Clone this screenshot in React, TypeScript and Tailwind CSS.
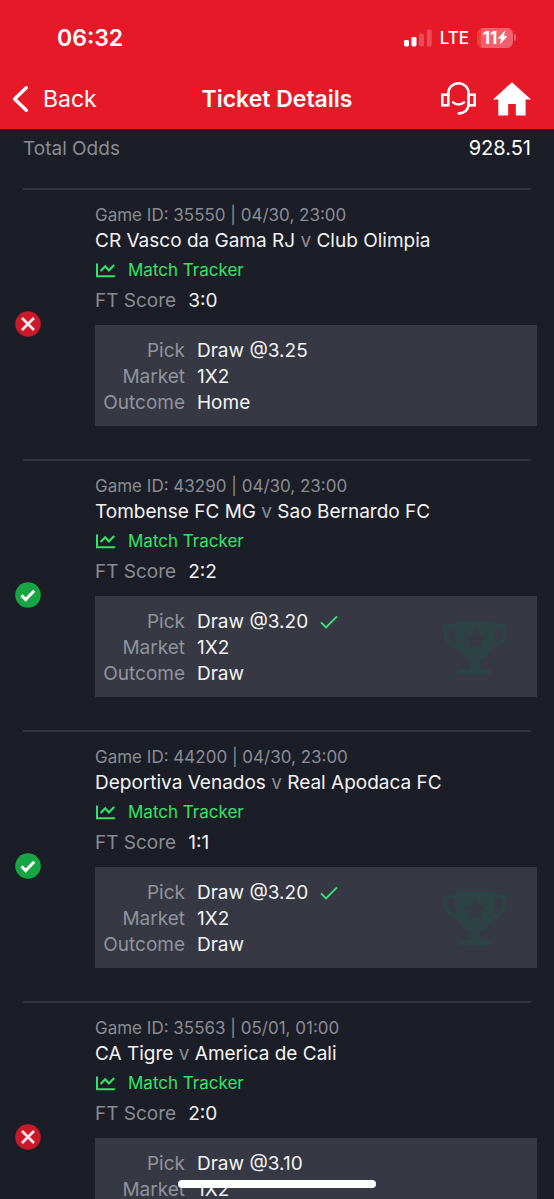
import React from "react";

type Game = {
  id: string;
  kickoff: string;
  home: string;
  away: string;
  score: string;
  pick: string;
  market: string;
  outcome: string;
  won: boolean;
};

const games: Game[] = [
  { id: "35550", kickoff: "04/30, 23:00", home: "CR Vasco da Gama RJ", away: "Club Olimpia", score: "3:0", pick: "Draw @3.25", market: "1X2", outcome: "Home", won: false },
  { id: "43290", kickoff: "04/30, 23:00", home: "Tombense FC MG", away: "Sao Bernardo FC", score: "2:2", pick: "Draw @3.20", market: "1X2", outcome: "Draw", won: true },
  { id: "44200", kickoff: "04/30, 23:00", home: "Deportiva Venados", away: "Real Apodaca FC", score: "1:1", pick: "Draw @3.20", market: "1X2", outcome: "Draw", won: true },
  { id: "35563", kickoff: "05/01, 01:00", home: "CA Tigre", away: "America de Cali", score: "2:0", pick: "Draw @3.10", market: "1X2", outcome: "Home", won: false },
];

function SignalIcon() {
  return (
    <svg width="28" height="18" viewBox="0 0 28 18" fill="#fff" aria-hidden="true">
      <rect x="0" y="11" width="5" height="6.5" rx="1.4" />
      <rect x="7.5" y="8" width="5" height="9.5" rx="1.4" />
      <rect x="15" y="4.5" width="5" height="13" rx="1.4" opacity="0.22" />
      <rect x="22.8" y="0.5" width="5" height="17" rx="1.4" opacity="0.22" />
    </svg>
  );
}

function BoltIcon() {
  return (
    <svg width="9" height="13" viewBox="0 0 9 13" fill="#fff" className="shrink-0" aria-hidden="true">
      <path d="M6.8 0 0 7.6h3.3L2.2 13 9 5.2H5.6z" stroke="#fff" strokeWidth="0.5" />
    </svg>
  );
}

function BackIcon() {
  return (
    <svg width="17" height="28" viewBox="0 0 17 28" fill="none" stroke="#fff" strokeWidth="3.4" strokeLinecap="round" strokeLinejoin="round" aria-hidden="true">
      <path d="M14.3 2.7 2.6 14l11.7 11.3" />
    </svg>
  );
}

function SupportIcon() {
  return (
    <svg width="35" height="33" viewBox="0 0 35 33" fill="none" stroke="#fff" strokeWidth="2.5" aria-hidden="true">
      <rect x="1.3" y="12.7" width="6" height="10.6" />
      <rect x="27.7" y="12.7" width="6" height="10.6" />
      <path d="M7.3 13v-1.6a10.2 10.2 0 0 1 20.4 0V21c0 6.6-3.8 10.4-10 10.4" strokeLinecap="round" />
      <path d="M12 20.4c3 2.7 8 2.7 11 0" strokeLinecap="round" />
    </svg>
  );
}

function HomeIcon() {
  return (
    <svg width="38" height="34" viewBox="0 0 38 34" fill="#fff" aria-hidden="true">
      <path d="M19 0.3 38 17.6h-5.4v15.9h-9.8V22h-7.6v11.5H5.3V17.6H0z" />
    </svg>
  );
}

function TrackerIcon() {
  return (
    <svg width="21" height="15" viewBox="0 0 21 15" fill="none" stroke="#34e468" strokeWidth="2" aria-hidden="true">
      <path d="M2 0.5v12.7h18" />
      <path d="m5.6 8 4.6-4.8 3.7 4.3 5.3-5.5" strokeWidth="2.1" />
    </svg>
  );
}

function StatusIcon({ won }: { won: boolean }) {
  return (
    <svg width="26" height="26" viewBox="0 0 26 26" fill="none" role="img" aria-label={won ? "Won" : "Lost"}>
      <circle cx="13" cy="13" r="12.8" fill={won ? "#17a643" : "#c9192b"} />
      {won ? (
        <path d="m6.6 13.4 4.1 4.2 8.5-8.8" stroke="#fff" strokeWidth="3" />
      ) : (
        <path d="m7 7 12 12M19 7 7 19" stroke="#fde4e6" strokeWidth="2.8" />
      )}
    </svg>
  );
}

function TickIcon() {
  return (
    <svg width="18" height="14" viewBox="0 0 18 14" fill="none" stroke="#3be473" strokeWidth="1.9" aria-hidden="true">
      <path d="m1 7.3 5 5L17 1.3" />
    </svg>
  );
}

function TrophyIcon() {
  return (
    <svg width="64" height="54" viewBox="0 0 64 54" fill="none" aria-hidden="true">
      <path d="M13 5H2.2v5.5C2.2 18.5 7 24 16 25.5M51 5h10.8v5.5C61.8 18.5 57 24 48 25.5" stroke="#2d4343" strokeWidth="4" />
      <path
        fill="#2d4343"
        fillRule="evenodd"
        d="M12 0h40v14c0 14-6 22.5-15.5 25.5V48H45a3.5 3.5 0 0 1 3.5 5.5h-33A3.5 3.5 0 0 1 19 48h8.5v-8.5C18 36.5 12 28 12 14zM32 6.5l-3.2 7.3-7.9.8 5.9 5.3-1.7 7.8 6.9-4 6.9 4-1.7-7.8 5.9-5.3-7.9-.8z"
      />
    </svg>
  );
}

function StatusBar() {
  return (
    <div className="flex h-[68px] items-center justify-between pt-[7px] pr-[38px] pl-[57px]">
      <span className="text-[23px] leading-7 font-semibold">06:32</span>
      <div className="flex items-center">
        <SignalIcon />
        <span className="ml-2 text-[17px] leading-6 font-medium">LTE</span>
        <span className="ml-2 flex h-5 w-9 items-center justify-center gap-px rounded-md bg-linear-to-r from-[#fb3b36] from-12% to-[#f2606d] to-12% text-[17px] leading-5 font-bold">
          11
          <BoltIcon />
        </span>
        <span className="ml-px h-[7px] w-[2px] rounded-r-full bg-[#f2606d]" />
      </div>
    </div>
  );
}

function GameRow({ game }: { game: Game }) {
  return (
    <li>
      <div className="mx-[23px] h-[2px] bg-[#30333c]" />
      <div className="flex items-center">
        <div className="w-[95px] shrink-0 pb-[2px] pl-[15px]">
          <StatusIcon won={game.won} />
        </div>
        <div className="mr-[17px] min-w-0 flex-1 pt-[13px] pb-[33px] text-[19px] text-[#f4f4f6]">
          <p className="text-[17px] leading-6 text-[#8a8c95]">
            Game ID: {game.id} | {game.kickoff}
          </p>
          <h2 className="leading-7">
            {game.home} <span className="text-[#8a8c95]">v</span> {game.away}
          </h2>
          <a href="#tracker" className="flex items-center gap-3 text-[17px] leading-[30px] text-[#34e468]">
            <TrackerIcon />
            Match Tracker
          </a>
          <p className="flex gap-3 leading-8">
            <span className="text-[#8a8c95]">FT Score</span>
            <span>{game.score}</span>
          </p>
          <div className="mt-2 flex items-center justify-between bg-[#363943] pt-[13px] pr-[30px] pb-[10px]">
            <dl className="grid grid-cols-[90px_auto] gap-x-3 leading-[26px]">
              <dt className="text-right text-[#91939d]">Pick</dt>
              <dd className="flex items-center gap-3">
                {game.pick}
                {game.won && <TickIcon />}
              </dd>
              <dt className="text-right text-[#91939d]">Market</dt>
              <dd>{game.market}</dd>
              <dt className="text-right text-[#91939d]">Outcome</dt>
              <dd>{game.outcome}</dd>
            </dl>
            {game.won && <TrophyIcon />}
          </div>
        </div>
      </div>
    </li>
  );
}

export default function App() {
  return (
    <div className="flex h-screen flex-col bg-[#1b1e26] font-['Inter',sans-serif] text-white">
      <header className="shrink-0 bg-[#e51927]">
        <StatusBar />
        <nav className="grid h-[61px] grid-cols-[1fr_auto_1fr] items-center px-3">
          <button type="button" className="flex items-center gap-[14px] text-[23px] leading-7">
            <BackIcon />
            Back
          </button>
          <h1 className="text-[23px] leading-7 font-semibold">Ticket Details</h1>
          <div className="flex items-center justify-end gap-[17px] pr-[11px]">
            <button type="button" aria-label="Support">
              <SupportIcon />
            </button>
            <button type="button" aria-label="Home">
              <HomeIcon />
            </button>
          </div>
        </nav>
      </header>
      <main className="min-h-0 flex-1 overflow-y-auto [scrollbar-width:none]">
        <div className="flex items-baseline justify-between px-[23px] pt-1 pb-6 leading-[30px]">
          <span className="text-[19px] text-[#8a8c95]">Total Odds</span>
          <span className="text-xl leading-[30px]">928.51</span>
        </div>
        <ul>
          {games.map((game) => (
            <GameRow key={game.id} game={game} />
          ))}
        </ul>
      </main>
      <div className="pointer-events-none fixed inset-x-0 bottom-[11px] mx-auto h-2 w-[198px] rounded-full bg-white" />
    </div>
  );
}
